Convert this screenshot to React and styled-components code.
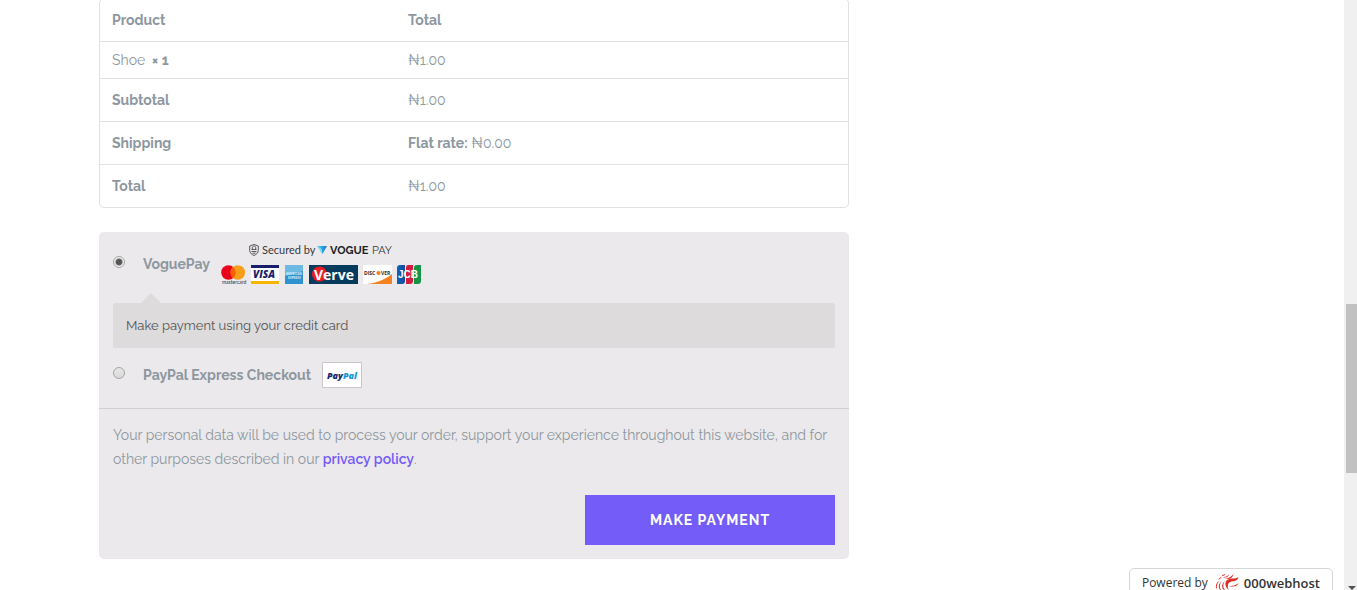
import React from "react";
import styled, { createGlobalStyle } from "styled-components";

const Global = createGlobalStyle`
  * { box-sizing: border-box; }
  html, body { margin: 0; height: 100%; overflow: hidden; }
  body {
    background: #fff;
    color: #8d97a0;
    font: 400 14px/24px Raleway, Lato, "Noto Sans", sans-serif;
  }
`;

const Screen = styled.div`
  display: flex;
  height: 100vh;
`;

const Page = styled.main`
  flex: 1;
  min-width: 0;
  padding: 0 99px;
  overflow: hidden;
`;

const Order = styled.div`
  max-width: 750px;
`;

const Summary = styled.table`
  width: 100%;
  margin: -2px 0 24px;
  table-layout: fixed;
  border: 1px solid #e1e2e3;
  border-radius: 5px;
  border-spacing: 0;
  text-align: left;

  th, td { padding: 9px 12px; }
  tr + tr > *, tbody > tr > * { border-top: 1px solid #e1e2e3; }
  th { font-weight: 700; }
  col:first-child { width: 296px; }
`;

const ItemCell = styled.td`
  && { padding: 6px 12px; }
  strong { margin-left: 3px; }
`;

const Payment = styled.section`
  background: #ebe9eb;
  border-radius: 5px;
`;

const Methods = styled.ul`
  margin: 0;
  padding: 10px 14px 20px;
  list-style: none;
  border-bottom: 1px solid #d0ced1;
`;

const Method = styled.li`
  display: flex;
  align-items: center;
`;

const Radio = styled.input`
  appearance: none;
  width: 12px;
  height: 12px;
  margin: 0 18px 4px 0;
  border: 1px solid #a5a5a5;
  border-radius: 50%;
  background: linear-gradient(#e6e6e6, #dadada);

  &:checked {
    background: radial-gradient(circle, #555 0 2px, #666 3px, #eee 4px);
  }
`;

const MethodLabel = styled.label`
  display: flex;
  align-items: center;
  gap: 11px;
  font-weight: 700;
`;

const Description = styled.p`
  position: relative;
  margin: 17px 0 14px;
  padding: 11px 13px 10px;
  border-radius: 2px;
  background: #dddbdc;
  color: #555;
  font-size: 13px;

  &::before {
    content: "";
    position: absolute;
    left: 28px;
    bottom: 100%;
    border: solid transparent;
    border-width: 0 10px 10px;
    border-bottom-color: #dddbdc;
  }
`;

const PayPalBadge = styled.svg`
  width: 40px;
  height: 26px;
`;

const Place = styled.div`
  display: flex;
  flex-direction: column;
  align-items: flex-end;
  gap: 24px;
  padding: 14px;
`;

const Privacy = styled.p`
  width: 100%;
  margin: 0;
`;

const PolicyLink = styled.a`
  color: #735cf7;
  font-weight: 600;
  text-decoration: none;
`;

const PayButton = styled.button`
  width: 250px;
  height: 50px;
  border: 0;
  background: #735cf7;
  color: #fff;
  font: inherit;
  font-weight: 700;
  letter-spacing: 1px;
  text-transform: uppercase;
`;

const Powered = styled.a`
  position: fixed;
  right: 24px;
  bottom: -8px;
  display: flex;
  align-items: center;
  height: 30px;
  padding: 0 12px;
  border: 1px solid #d6d6d6;
  border-radius: 5px;
  background: #fff;
  color: #333;
  font: 400 12px/24px "Open Sans", sans-serif;
  text-decoration: none;

  svg { width: 24px; height: 20px; margin: 0 5px 0 7px; }
  strong { font: 600 13px/24px "Open Sans", sans-serif; }
`;

const Track = styled.div`
  display: flex;
  flex-direction: column;
  width: 13px;
  padding-left: 2px;
  background: #f0f0f0;
`;

const Thumb = styled.div`
  flex: 0 0 169px;
  margin: 304px 0 auto;
  background: #c1c1c1;
`;

const Arrow = styled.div`
  align-self: center;
  border: 4px solid transparent;
  border-bottom: 0;
  border-top-color: #505050;
`;

function VogueCards() {
  return (
    <svg width="200" height="44" viewBox="0 0 200 44" role="img" aria-label="Secured by VoguePay">
      <defs>
        <linearGradient id="vogue" x2="1">
          <stop offset="0" stopColor="#70d0f2" />
          <stop offset=".5" stopColor="#23a9e0" />
          <stop offset="1" stopColor="#3267c8" />
        </linearGradient>
        <linearGradient id="jcbBlue"><stop stopColor="#0965b5" /><stop offset="1" stopColor="#194b9d" /></linearGradient>
      </defs>
      <g fill="none" stroke="#58585d">
        <path d="M33 2.5 37.3 4v4.3c0 2.5-1.8 4.1-4.3 5.2-2.5-1.1-4.3-2.7-4.3-5.2V4z" />
        <path d="M31.3 7V5.7c0-2.2 3.4-2.2 3.4 0V7" />
        <path d="M30.5 7.5h5M30.5 9.5h5M31.5 11.2h3" />
      </g>
      <g fontFamily="Lato, sans-serif" fontSize="11" fontWeight="400" fill="#38383c">
        <text x="41" y="12">Secured by</text>
        <text x="109" y="12" fontFamily="Raleway, sans-serif" fontWeight="700" fill="#202124">VOGUE</text>
        <text x="151" y="12" fontFamily="Raleway, sans-serif">PAY</text>
      </g>
      <path d="M96 4h10l-4.5 8z" fill="url(#vogue)" />
      <path d="m96 4 4.5 3 1 5z" fill="#8bdcf5" />
      <circle cx="7.5" cy="30.5" r="7.3" fill="#eb001b" />
      <circle cx="16.8" cy="30.5" r="7.3" fill="#f79e1b" />
      <path d="M12.1 24.9a7.3 7.3 0 0 1 0 11.2 7.3 7.3 0 0 1 0-11.2" fill="#ff5f00" />
      <text x="1" y="42" fontFamily="Lato, sans-serif" fontSize="5" fontWeight="400" fill="#343136">mastercard</text>
      <path d="M30 23h28v19H30z" fill="#fff" />
      <path d="M30 23h28v3H30z" fill="#191e6c" />
      <path d="M30 39h28v3H30z" fill="#f7b600" />
      <text x="32" y="36" fontFamily="Open Sans, sans-serif" fontSize="10" fontWeight="800" fontStyle="italic" fill="#191e6c">VISA</text>
      <path d="M64 23h18v19H64z" fill="#2f92d0" />
      <path d="M64 23h18v6l-18 5z" fill="#6db9e2" />
      <g fontFamily="Open Sans, sans-serif" fontSize="3" fontWeight="700" fill="#d5eefa">
        <text x="65" y="33">AMERICAN</text>
        <text x="67" y="37">EXPRESS</text>
      </g>
      <path d="M88 23h49v19H88z" fill="#063b5e" />
      <circle cx="98.5" cy="32" r="7.5" fill="#ed1c24" />
      <text x="93" y="38" fontFamily="Open Sans, sans-serif" fontSize="14" fontWeight="700" fill="#fff">Verve</text>
      <path d="M142 23h29v19h-29z" fill="#fff" />
      <path d="M171 32v10h-25c10-1 19-5 25-10" fill="#f58220" />
      <text x="143" y="33" fontFamily="Open Sans, sans-serif" fontSize="5" fontWeight="700" fill="#302b2b">DISC</text>
      <circle cx="157.5" cy="31" r="2.1" fill="#f58220" />
      <text x="160" y="33" fontFamily="Open Sans, sans-serif" fontSize="5" fontWeight="700" fill="#302b2b">VER</text>
      <path d="M179 23h5v16q0 3-3 3h-5V26q0-3 3-3" fill="url(#jcbBlue)" />
      <path d="M187 23h5v16q0 3-3 3h-4V26q0-3 2-3" fill="#d41d43" />
      <path d="M196 23h4v16q0 3-3 3h-4V26q0-3 3-3" fill="#159447" />
      <text x="177" y="36" fontFamily="Liberation Sans, sans-serif" fontSize="10" fontWeight="700" fill="#fff">JCB</text>
    </svg>
  );
}

function PayPalMark() {
  return (
    <PayPalBadge viewBox="0 0 40 26" role="img" aria-label="PayPal">
      <path d="M.5.5h39v25H.5z" fill="#fff" stroke="#c9c7ca" />
      <text x="5" y="17" fontFamily="Open Sans, sans-serif" fontSize="9" fontWeight="800" fontStyle="italic" fill="#172c70">
        Pay<tspan fill="#1598d5">Pal</tspan>
      </text>
    </PayPalBadge>
  );
}

function HostMark() {
  return (
    <svg viewBox="0 0 24 20" aria-hidden="true">
      <g fill="#df2b24">
        <path d="M23.5 4c-1 4-4 4-7 4.500-3.500.8-4.500 3.500-3 8.500-4-4-4-8.500-.5-10.500 3.500-2 7 .3 10.500-2.500" />
        <path d="M23.500 10c-1.500 4-5.500 4-9.500 3 2.500-.2 6 .3 9.500-3" />
        <path d="M10 8c-3 4-2 8 2 11-5-2-7-7-2-11" />
        <path d="M6.500 8.500C4 12 4.500 16 7.500 19 3 16 2.500 11.500 6.500 8.500" />
        <path d="M10 5.500c4-.2 6-1.500 8.500-4.500-.7 4-4 6-8.500 4.500" />
        <path d="M8 4c2.500.2 4.500-.7 6-2.500C13.500 4 11 5.500 8 4" />
      </g>
      <path d="M3 9c-1.500 2-2 4-1.500 6M4 6l2-1.500M7.500 2.500l2-.8" fill="none" stroke="#df2b24" strokeLinecap="round" />
    </svg>
  );
}

const totals = [
  ["Subtotal", "₦1.00"],
  ["Shipping", <><strong>Flat rate:</strong> ₦0.00</>],
  ["Total", "₦1.00"],
];

export default function App() {
  return (
    <>
      <Global />
      <Screen>
        <Page>
          <Order>
            <Summary>
              <colgroup><col /><col /></colgroup>
              <thead>
                <tr><th scope="col">Product</th><th scope="col">Total</th></tr>
              </thead>
              <tbody>
                <tr>
                  <ItemCell>Shoe <strong>× 1</strong></ItemCell>
                  <ItemCell>₦1.00</ItemCell>
                </tr>
                {totals.map(([name, value]) => (
                  <tr key={name}><th scope="row">{name}</th><td>{value}</td></tr>
                ))}
              </tbody>
            </Summary>
            <Payment>
              <Methods>
                <Method>
                  <Radio type="radio" name="method" id="vogue-pay" defaultChecked />
                  <MethodLabel htmlFor="vogue-pay">VoguePay <VogueCards /></MethodLabel>
                </Method>
                <li><Description>Make payment using your credit card</Description></li>
                <Method>
                  <Radio type="radio" name="method" id="paypal" />
                  <MethodLabel htmlFor="paypal">PayPal Express Checkout <PayPalMark /></MethodLabel>
                </Method>
              </Methods>
              <Place>
                <Privacy>
                  Your personal data will be used to process your order, support your experience throughout this website, and for other purposes described in our <PolicyLink href="#privacy">privacy policy</PolicyLink>.
                </Privacy>
                <PayButton type="button">Make payment</PayButton>
              </Place>
            </Payment>
          </Order>
        </Page>
        <Track><Thumb /><Arrow /></Track>
      </Screen>
      <Powered href="#host">Powered by <HostMark /><strong>000webhost</strong></Powered>
    </>
  );
}
